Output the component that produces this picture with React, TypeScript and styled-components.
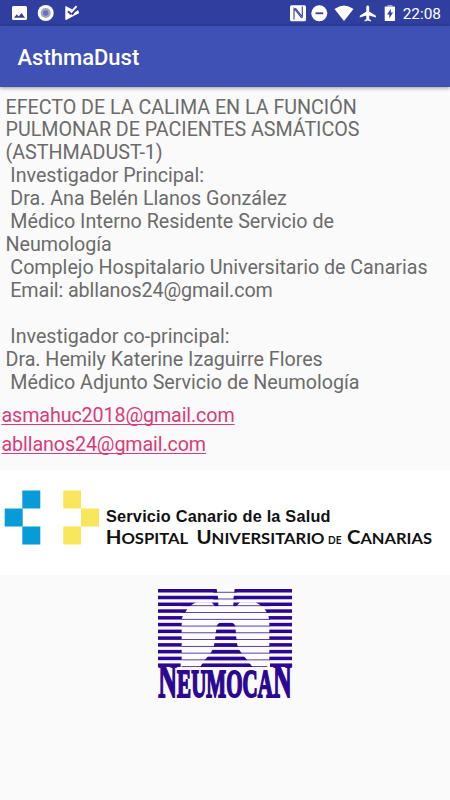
import React from "react";
import styled, { createGlobalStyle } from "styled-components";

const GlobalStyle = createGlobalStyle`
  * { box-sizing: border-box; }
  body {
    margin: 0;
    background: #fafafa;
    font-family: Roboto, "Liberation Sans", sans-serif;
  }
`;

const Screen = styled.main`
  display: flex;
  flex-direction: column;
  width: 450px;
  height: 800px;
  overflow: hidden;
  background: #fafafa;
`;

const StatusBar = styled.div`
  flex: none;
  display: flex;
  align-items: center;
  justify-content: space-between;
  height: 26px;
  padding: 0 9px 0 11px;
  background: #303f9f;
  color: #fff;
`;

const StatusGroup = styled.div<{ $gap: number }>`
  display: flex;
  align-items: center;
  gap: ${(p) => p.$gap}px;
  svg { display: block; }
`;

const Clock = styled.span`
  font-size: 15.4px;
  line-height: 18px;
  padding-top: 2px;
  margin-left: 1px;
`;

const AppBar = styled.header`
  flex: none;
  display: flex;
  align-items: center;
  height: 61px;
  padding: 2px 17.5px 0;
  background: #3f51b5;
  box-shadow: 0 1px 4px rgba(0, 0, 0, 0.4);
`;

const Title = styled.h1`
  margin: 0;
  color: #fff;
  font-size: 22px;
  font-weight: 500;
  line-height: 26px;
`;

const Description = styled.p`
  flex: none;
  margin: 0;
  padding: 9.5px 0 0 5.5px;
  height: 314px;
  color: #6b6b6b;
  font-size: 19.7px;
  letter-spacing: -0.025px;
  line-height: 22.93px;
  white-space: pre;
`;

const Tight = styled.span`
  letter-spacing: -0.1px;
`;

const Links = styled.nav`
  flex: none;
  display: flex;
  flex-direction: column;
  align-items: flex-start;
  height: 69px;
  padding-left: 1.5px;
`;

const MailLink = styled.a`
  height: 29px;
  color: #d93a78;
  font-size: 19.7px;
  letter-spacing: -0.11px;
  line-height: 29px;
  text-decoration: underline;
  text-decoration-thickness: 1px;
  text-underline-offset: 2px;
  text-decoration-skip-ink: none;
`;

const Banner = styled.section`
  flex: none;
  height: 105px;
  background: #fff;
  svg { display: block; }
`;

const LogoRow = styled.section`
  display: flex;
  justify-content: center;
  padding-top: 14px;
  svg { overflow: visible; }
`;

const studyLines = [
  "EFECTO DE LA CALIMA EN LA FUNCIÓN",
  "PULMONAR DE PACIENTES ASMÁTICOS",
  "(ASTHMADUST-1)",
  " Investigador Principal:",
  " Dra. Ana Belén Llanos González",
  " Médico Interno Residente Servicio de",
  "Neumología",
  " Complejo Hospitalario Universitario de Canarias",
  "",
].join("\n");

const coInvestigatorLines = [
  "",
  "",
  " Investigador co-principal:",
  "Dra. Hemily Katerine Izaguirre Flores",
  " Médico Adjunto Servicio de Neumología",
].join("\n");

const NotificationIcons = () => (
  <svg width="70" height="26" viewBox="11 0 70 26" fill="#fff">
    <path fillRule="evenodd" d="M13.500 6h12q1.500 0 1.500 1.500v11q0 1.500-1.500 1.500h-12q-1.500 0-1.500-1.500v-11q0-1.500 1.500-1.500ZM14 17.700h11l-3.500-4.800-2.800 3.500-1.900-2.200Z" />
    <circle cx="45.700" cy="13" r="8" />
    <circle cx="45.700" cy="13" r="5" fill="#9da3d0" />
    <circle cx="45.700" cy="13" r="2.700" fill="#6870b5" />
    <path d="M66.200 6.200L79 12.900 66.200 20q-.9.400-.9-.7V6.900q0-1.100.9-.7Z" />
    <path d="M71.200 14L78 5.500" fill="none" stroke="#303f9f" strokeWidth="3.800" />
    <path d="M68 11.200l3.200 3.200" fill="none" stroke="#303f9f" strokeWidth="2" />
    <path d="M70.800 12.500l5.800-6.300" fill="none" stroke="#fff" strokeWidth="1.900" />
    <path d="M74 13.600l4-3.500 1.200 2.800-4 2Z" />
  </svg>
);

const SystemIcons = () => (
  <svg width="110" height="26" viewBox="289 0 110 26" fill="#fff">
    <rect x="290" y="5.200" width="16" height="16" rx="1.500" />
    <path d="M294 19.500V8.500l7.700 9.500M302.300 6.500v10.300l-7-8.600" fill="none" stroke="#303f9f" strokeWidth="1.100" />
    <circle cx="319.300" cy="13.300" r="8" />
    <rect x="315.500" y="12.400" width="7.700" height="1.800" fill="#303f9f" />
    <path d="M334.500 9.100Q344 2 353.500 9.100L344 21Z" />
    <path d="M366.300 7.200c0-2.300 2.900-2.300 2.900 0v4.400l6.700 4.100v1.700l-6.700-2v3.600l1.900 1.400v1.200l-3.300-1-3.300 1v-1.200l1.800-1.400v-3.600l-6.500 2v-1.700l6.500-4.100Z" />
    <path fill="#9da3d0" d="M387.400 5h5v1.500h-5Z" />
    <path fillRule="evenodd" d="M385.300 6.500h9.100q.6 0 .6.600v13.100q0 .8-.8.800h-8.700q-.8 0-.8-.8V7.100q0-.6.600-.6ZM390.800 8.700l-3.700 5.700h2.200v4.200l3.700-6h-2.200Z" />
  </svg>
);

const HospitalLogo = () => (
  <svg width="450" height="105" viewBox="0 470 450 105">
    <g fill="#079bd7">
      <rect x="22.300" y="490.500" width="18" height="18" />
      <rect x="4.700" y="508.500" width="18" height="18" />
      <rect x="22.300" y="526.500" width="18" height="18" />
    </g>
    <g fill="#f9e65b">
      <rect x="63.300" y="490.500" width="17.700" height="18" />
      <rect x="81" y="508.500" width="18" height="18" />
      <rect x="63.300" y="526.500" width="17.700" height="18" />
    </g>
    <g fill="#111">
      <text x="106" y="521.500" fontFamily="Liberation Sans, sans-serif" fontWeight="700" fontSize="16.300" textLength="224.500">Servicio Canario de la Salud</text>
      <g fontFamily="Lato, sans-serif" fontWeight="700">
        <text x="105.700" y="544" fontSize="18.900" textLength="82.500" lengthAdjust="spacingAndGlyphs">H<tspan fontSize="15.400">OSPITAL</tspan></text>
        <text x="196.500" y="544" fontSize="18.900" textLength="128" lengthAdjust="spacingAndGlyphs">U<tspan fontSize="15.400">NIVERSITARIO</tspan></text>
        <text x="328" y="544" fontSize="10.500" textLength="13.500" lengthAdjust="spacingAndGlyphs">DE</text>
        <text x="347" y="544" fontSize="18.900" textLength="85" lengthAdjust="spacingAndGlyphs">C<tspan fontSize="15.400">ANARIAS</tspan></text>
      </g>
    </g>
  </svg>
);

const stripes = Array.from({ length: 12 }, (_, i) => 27 + i * 20.300);

const NeumocanLogo = () => (
  <svg width="134" height="110" viewBox="24 27 402 330" fill="#2c0792">
    {stripes.map((y) => (
      <rect key={y} x="24" y={y} width="402" height="10.500" />
    ))}
    <path
      fill="#fdfdff"
      d="M200 26H254L250 60V78Q250 84 257 80L270 67H316Q340 78 350 97Q358 108 358 124V246H360V262H308L296 246L272 216Q262 204 260 186L256 138Q252 128 238 127H218Q204 128 200 138L194 186Q192 204 184 216L160 246L150 262H92V246H95V124Q95 108 106 97Q116 78 138 67H185L196 80Q205 84 205 78V60Z"
    />
    {stripes.map((y, i) => (
      <rect key={y} x={i < 2 ? 190 : 95} y={y + 8.500} width={i < 2 ? 70 : i === 11 ? 257 : 265} height="2.300" />
    ))}
    <text
      x="25"
      y="350"
      fontFamily="Liberation Serif, serif"
      fontWeight="700"
      fontSize="146"
      stroke="#2c0792"
      strokeWidth="6"
      textLength="400"
      lengthAdjust="spacingAndGlyphs"
    >
      N<tspan fontSize="118">EUMOCA</tspan>N
    </text>
  </svg>
);

export default function App() {
  return (
    <>
      <GlobalStyle />
      <Screen>
        <StatusBar>
          <StatusGroup $gap={0}>
            <NotificationIcons />
          </StatusGroup>
          <StatusGroup $gap={3}>
            <SystemIcons />
            <Clock>22:08</Clock>
          </StatusGroup>
        </StatusBar>
        <AppBar>
          <Title>AsthmaDust</Title>
        </AppBar>
        <Description>
          {studyLines}
          <Tight>{" Email: abllanos24@gmail.com"}</Tight>
          {coInvestigatorLines}
        </Description>
        <Links>
          <MailLink href="mailto:asmahuc2018@gmail.com">asmahuc2018@gmail.com</MailLink>
          <MailLink href="mailto:abllanos24@gmail.com">abllanos24@gmail.com</MailLink>
        </Links>
        <Banner>
          <HospitalLogo />
        </Banner>
        <LogoRow>
          <NeumocanLogo />
        </LogoRow>
      </Screen>
    </>
  );
}
